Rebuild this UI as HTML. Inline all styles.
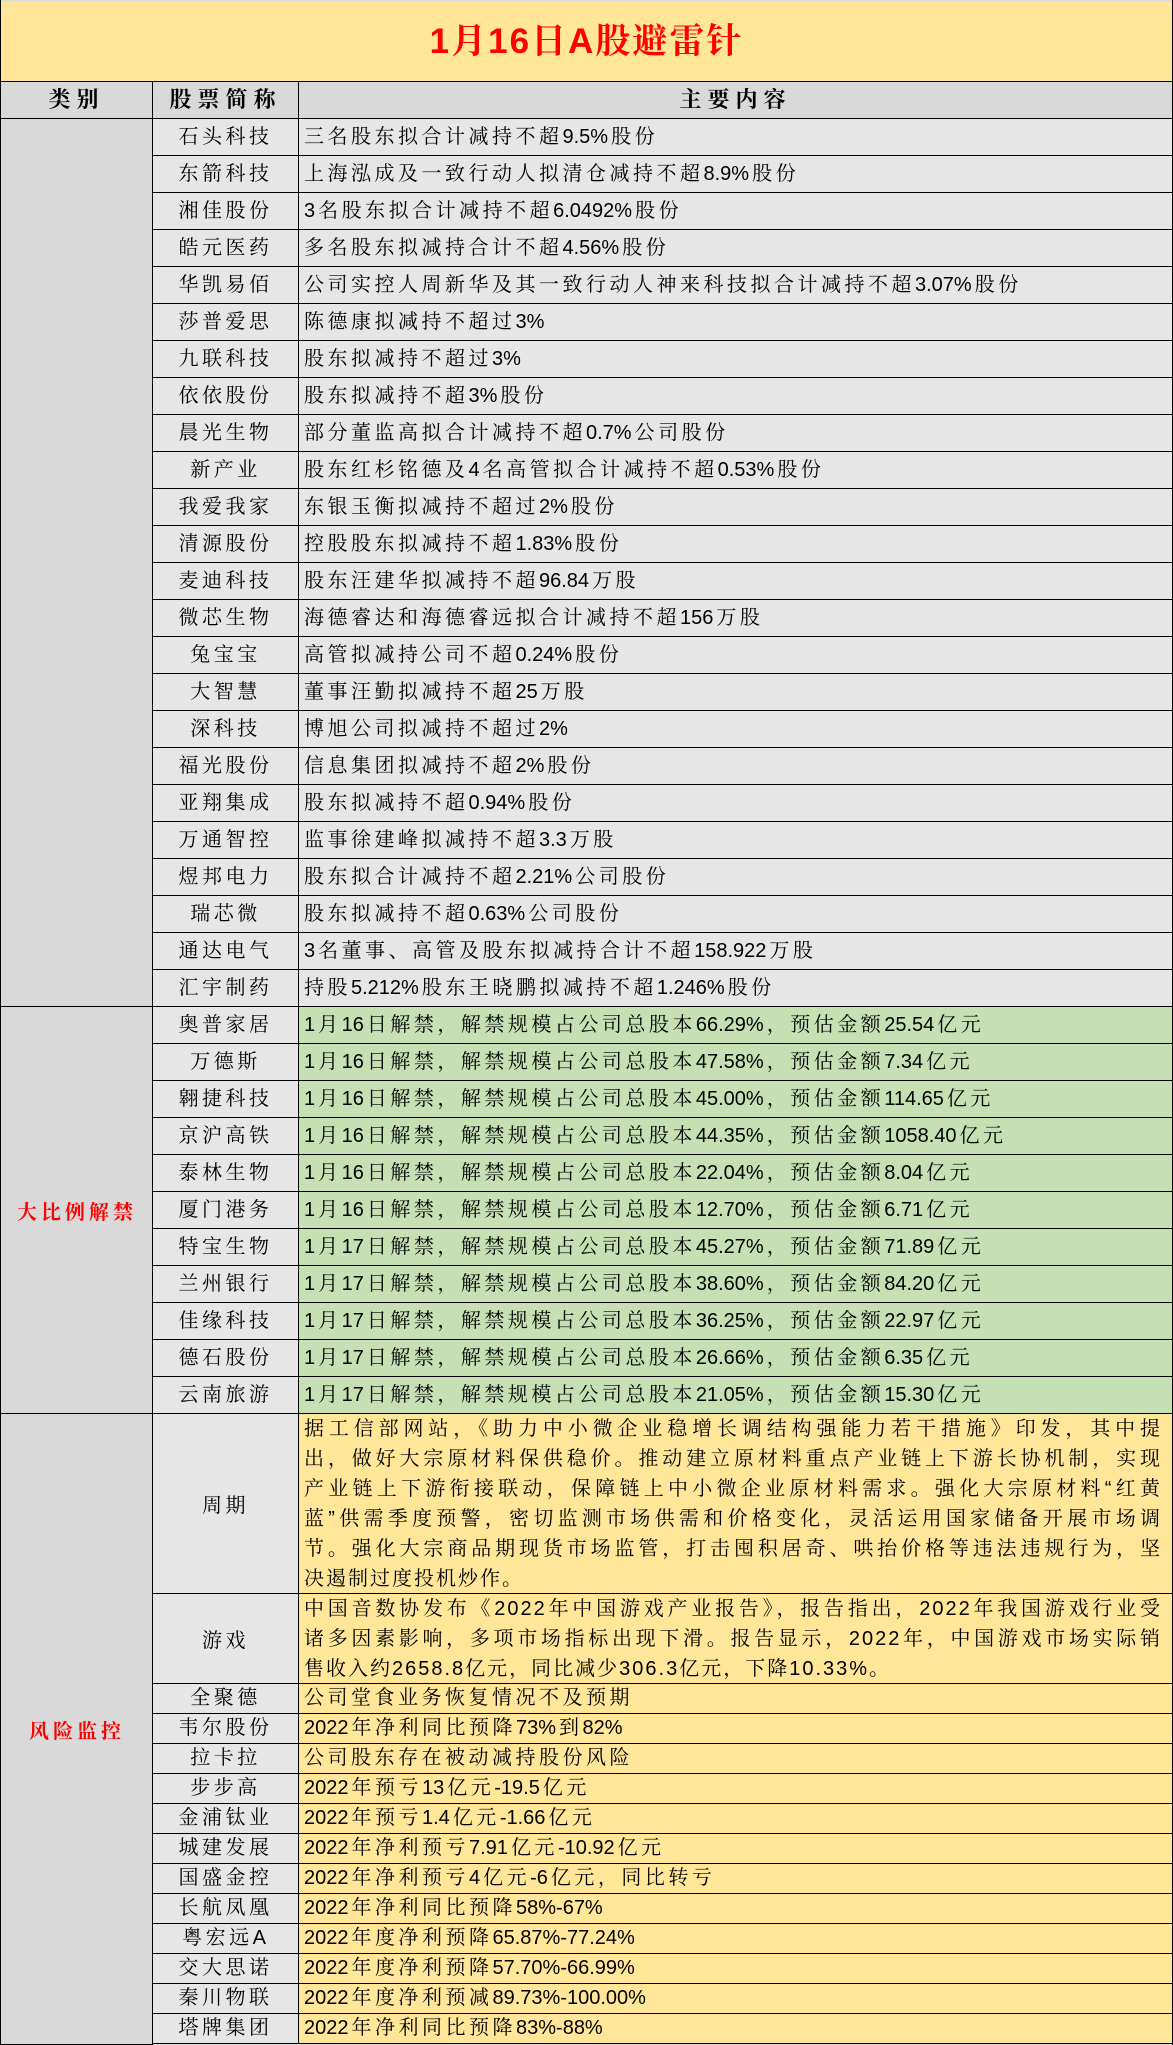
<!DOCTYPE html>
<html><head><meta charset="utf-8"><style>
*{margin:0;padding:0;box-sizing:border-box}
body{width:1173px;height:2045px;background:#fff;font-family:"Liberation Sans","Noto Serif CJK SC",serif;color:#000;overflow:hidden}
i{font-style:normal;letter-spacing:0;margin-right:3px}
#wrap{position:relative;width:1173px;height:2045px;border-left:1px solid #000;border-right:1px solid #000;background:#d9d9d9}
.title{height:82px;background:#ffe699;border-bottom:1px solid #000;border-top:2px solid #ddd;text-align:center;line-height:80px;color:#ff0000;font-weight:bold;font-size:35px;letter-spacing:2px}
.hdr{display:flex;height:37px;background:#d9d9d9;border-bottom:1px solid #000;font-weight:bold;font-size:22px;line-height:36px;letter-spacing:6px}
.hdr div{text-align:center}
.h1{width:152px;border-right:1px solid #000}
.h2{width:146px;border-right:1px solid #000}
.h3{flex:1}
.row{display:flex;height:37px;font-size:20px;letter-spacing:3.5px;line-height:36px}
.c1{width:152px;border-right:1px solid #000}
.c2{width:146px;border-right:1px solid #000;border-bottom:1px solid #000;background:#e7e6e6;text-align:center;white-space:nowrap}
.c3{flex:1;border-bottom:1px solid #000;background:#e7e6e6;padding-left:5px;white-space:nowrap}
.g .c3{background:#c6e0b4}
.o .c3{background:#ffe699}
.s{height:30px;line-height:29px}
.p .c3{white-space:normal;line-height:30px;padding-right:10px;letter-spacing:2px}
.p .c2{line-height:normal;display:flex;align-items:center;justify-content:center}
.j{text-align:justify;text-align-last:justify;height:30px;overflow:hidden}
.cat{position:absolute;left:0;width:152px;border-bottom:1px solid #000;display:flex;align-items:center;justify-content:center;color:#ff0000;font-weight:bold;font-size:20px;letter-spacing:4px}
</style></head><body><div id="wrap">
<div class="title">1月16日A股避雷针</div>
<div class="hdr"><div class="h1">类别</div><div class="h2">股票简称</div><div class="h3">主要内容</div></div>

<div class="row"><div class="c1"></div><div class="c2">石头科技</div><div class="c3">三名股东拟合计减持不超<i>9.5%</i>股份</div></div>
<div class="row"><div class="c1"></div><div class="c2">东箭科技</div><div class="c3">上海泓成及一致行动人拟清仓减持不超<i>8.9%</i>股份</div></div>
<div class="row"><div class="c1"></div><div class="c2">湘佳股份</div><div class="c3"><i>3</i>名股东拟合计减持不超<i>6.0492%</i>股份</div></div>
<div class="row"><div class="c1"></div><div class="c2">皓元医药</div><div class="c3">多名股东拟减持合计不超<i>4.56%</i>股份</div></div>
<div class="row"><div class="c1"></div><div class="c2">华凯易佰</div><div class="c3">公司实控人周新华及其一致行动人神来科技拟合计减持不超<i>3.07%</i>股份</div></div>
<div class="row"><div class="c1"></div><div class="c2">莎普爱思</div><div class="c3">陈德康拟减持不超过<i>3%</i></div></div>
<div class="row"><div class="c1"></div><div class="c2">九联科技</div><div class="c3">股东拟减持不超过<i>3%</i></div></div>
<div class="row"><div class="c1"></div><div class="c2">依依股份</div><div class="c3">股东拟减持不超<i>3%</i>股份</div></div>
<div class="row"><div class="c1"></div><div class="c2">晨光生物</div><div class="c3">部分董监高拟合计减持不超<i>0.7%</i>公司股份</div></div>
<div class="row"><div class="c1"></div><div class="c2">新产业</div><div class="c3">股东红杉铭德及<i>4</i>名高管拟合计减持不超<i>0.53%</i>股份</div></div>
<div class="row"><div class="c1"></div><div class="c2">我爱我家</div><div class="c3">东银玉衡拟减持不超过<i>2%</i>股份</div></div>
<div class="row"><div class="c1"></div><div class="c2">清源股份</div><div class="c3">控股股东拟减持不超<i>1.83%</i>股份</div></div>
<div class="row"><div class="c1"></div><div class="c2">麦迪科技</div><div class="c3">股东汪建华拟减持不超<i>96.84</i>万股</div></div>
<div class="row"><div class="c1"></div><div class="c2">微芯生物</div><div class="c3">海德睿达和海德睿远拟合计减持不超<i>156</i>万股</div></div>
<div class="row"><div class="c1"></div><div class="c2">兔宝宝</div><div class="c3">高管拟减持公司不超<i>0.24%</i>股份</div></div>
<div class="row"><div class="c1"></div><div class="c2">大智慧</div><div class="c3">董事汪勤拟减持不超<i>25</i>万股</div></div>
<div class="row"><div class="c1"></div><div class="c2">深科技</div><div class="c3">博旭公司拟减持不超过<i>2%</i></div></div>
<div class="row"><div class="c1"></div><div class="c2">福光股份</div><div class="c3">信息集团拟减持不超<i>2%</i>股份</div></div>
<div class="row"><div class="c1"></div><div class="c2">亚翔集成</div><div class="c3">股东拟减持不超<i>0.94%</i>股份</div></div>
<div class="row"><div class="c1"></div><div class="c2">万通智控</div><div class="c3">监事徐建峰拟减持不超<i>3.3</i>万股</div></div>
<div class="row"><div class="c1"></div><div class="c2">煜邦电力</div><div class="c3">股东拟合计减持不超<i>2.21%</i>公司股份</div></div>
<div class="row"><div class="c1"></div><div class="c2">瑞芯微</div><div class="c3">股东拟减持不超<i>0.63%</i>公司股份</div></div>
<div class="row"><div class="c1"></div><div class="c2">通达电气</div><div class="c3"><i>3</i>名董事、高管及股东拟减持合计不超<i>158.922</i>万股</div></div>
<div class="row"><div class="c1"></div><div class="c2">汇宇制药</div><div class="c3">持股<i>5.212%</i>股东王晓鹏拟减持不超<i>1.246%</i>股份</div></div>

<div class="row g"><div class="c1"></div><div class="c2">奥普家居</div><div class="c3"><i>1</i>月<i>16</i>日解禁，解禁规模占公司总股本<i>66.29%</i>，预估金额<i>25.54</i>亿元</div></div>
<div class="row g"><div class="c1"></div><div class="c2">万德斯</div><div class="c3"><i>1</i>月<i>16</i>日解禁，解禁规模占公司总股本<i>47.58%</i>，预估金额<i>7.34</i>亿元</div></div>
<div class="row g"><div class="c1"></div><div class="c2">翱捷科技</div><div class="c3"><i>1</i>月<i>16</i>日解禁，解禁规模占公司总股本<i>45.00%</i>，预估金额<i>114.65</i>亿元</div></div>
<div class="row g"><div class="c1"></div><div class="c2">京沪高铁</div><div class="c3"><i>1</i>月<i>16</i>日解禁，解禁规模占公司总股本<i>44.35%</i>，预估金额<i>1058.40</i>亿元</div></div>
<div class="row g"><div class="c1"></div><div class="c2">泰林生物</div><div class="c3"><i>1</i>月<i>16</i>日解禁，解禁规模占公司总股本<i>22.04%</i>，预估金额<i>8.04</i>亿元</div></div>
<div class="row g"><div class="c1"></div><div class="c2">厦门港务</div><div class="c3"><i>1</i>月<i>16</i>日解禁，解禁规模占公司总股本<i>12.70%</i>，预估金额<i>6.71</i>亿元</div></div>
<div class="row g"><div class="c1"></div><div class="c2">特宝生物</div><div class="c3"><i>1</i>月<i>17</i>日解禁，解禁规模占公司总股本<i>45.27%</i>，预估金额<i>71.89</i>亿元</div></div>
<div class="row g"><div class="c1"></div><div class="c2">兰州银行</div><div class="c3"><i>1</i>月<i>17</i>日解禁，解禁规模占公司总股本<i>38.60%</i>，预估金额<i>84.20</i>亿元</div></div>
<div class="row g"><div class="c1"></div><div class="c2">佳缘科技</div><div class="c3"><i>1</i>月<i>17</i>日解禁，解禁规模占公司总股本<i>36.25%</i>，预估金额<i>22.97</i>亿元</div></div>
<div class="row g"><div class="c1"></div><div class="c2">德石股份</div><div class="c3"><i>1</i>月<i>17</i>日解禁，解禁规模占公司总股本<i>26.66%</i>，预估金额<i>6.35</i>亿元</div></div>
<div class="row g"><div class="c1"></div><div class="c2">云南旅游</div><div class="c3"><i>1</i>月<i>17</i>日解禁，解禁规模占公司总股本<i>21.05%</i>，预估金额<i>15.30</i>亿元</div></div>

<div class="row o p" style="height:180px"><div class="c1"></div><div class="c2">周期</div><div class="c3">
<div class="j">据工信部网站，《助力中小微企业稳增长调结构强能力若干措施》印发，其中提</div>
<div class="j">出，做好大宗原材料保供稳价。推动建立原材料重点产业链上下游长协机制，实现</div>
<div class="j">产业链上下游衔接联动，保障链上中小微企业原材料需求。强化大宗原材料“红黄</div>
<div class="j">蓝”供需季度预警，密切监测市场供需和价格变化，灵活运用国家储备开展市场调</div>
<div class="j">节。强化大宗商品期现货市场监管，打击囤积居奇、哄抬价格等违法违规行为，坚</div>
<div>决遏制过度投机炒作。</div></div></div>
<div class="row o p" style="height:90px"><div class="c1"></div><div class="c2">游戏</div><div class="c3">
<div class="j">中国音数协发布《2022年中国游戏产业报告》，报告指出，2022年我国游戏行业受</div>
<div class="j">诸多因素影响，多项市场指标出现下滑。报告显示，2022年，中国游戏市场实际销</div>
<div>售收入约2658.8亿元，同比减少306.3亿元，下降10.33%。</div></div></div>

<div class="row o s"><div class="c1"></div><div class="c2">全聚德</div><div class="c3">公司堂食业务恢复情况不及预期</div></div>
<div class="row o s"><div class="c1"></div><div class="c2">韦尔股份</div><div class="c3"><i>2022</i>年净利同比预降<i>73%</i>到<i>82%</i></div></div>
<div class="row o s"><div class="c1"></div><div class="c2">拉卡拉</div><div class="c3">公司股东存在被动减持股份风险</div></div>
<div class="row o s"><div class="c1"></div><div class="c2">步步高</div><div class="c3"><i>2022</i>年预亏<i>13</i>亿元<i>-19.5</i>亿元</div></div>
<div class="row o s"><div class="c1"></div><div class="c2">金浦钛业</div><div class="c3"><i>2022</i>年预亏<i>1.4</i>亿元<i>-1.66</i>亿元</div></div>
<div class="row o s"><div class="c1"></div><div class="c2">城建发展</div><div class="c3"><i>2022</i>年净利预亏<i>7.91</i>亿元<i>-10.92</i>亿元</div></div>
<div class="row o s"><div class="c1"></div><div class="c2">国盛金控</div><div class="c3"><i>2022</i>年净利预亏<i>4</i>亿元<i>-6</i>亿元，同比转亏</div></div>
<div class="row o s"><div class="c1"></div><div class="c2">长航凤凰</div><div class="c3"><i>2022</i>年净利同比预降<i>58%-67%</i></div></div>
<div class="row o s"><div class="c1"></div><div class="c2">粤宏远<i>A</i></div><div class="c3"><i>2022</i>年度净利预降<i>65.87%-77.24%</i></div></div>
<div class="row o s"><div class="c1"></div><div class="c2">交大思诺</div><div class="c3"><i>2022</i>年度净利预降<i>57.70%-66.99%</i></div></div>
<div class="row o s"><div class="c1"></div><div class="c2">秦川物联</div><div class="c3"><i>2022</i>年度净利预减<i>89.73%-100.00%</i></div></div>
<div class="row o s"><div class="c1"></div><div class="c2">塔牌集团</div><div class="c3"><i>2022</i>年净利同比预降<i>83%-88%</i></div></div>

<div class="cat" style="top:119px;height:888px"></div>
<div class="cat" style="top:1007px;height:407px">大比例解禁</div>
<div class="cat" style="top:1414px;height:631px">风险监控</div>
</div></body></html>
